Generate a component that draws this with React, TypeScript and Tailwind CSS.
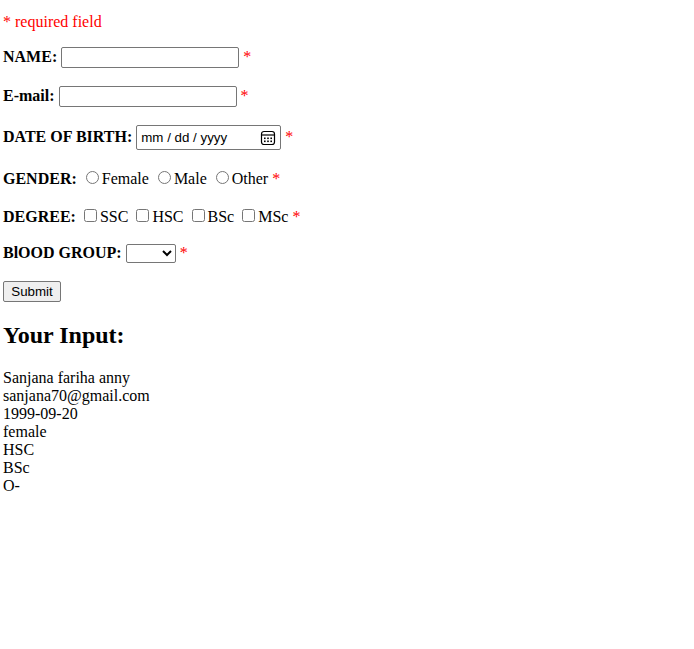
import React from "react";

const inputText =
  "align-baseline bg-white border border-[#767676] rounded-[2px] px-[2px] py-[1px] font-['Liberation_Sans',Arial,sans-serif] text-[13.333px] leading-[normal] text-black";

function Star() {
  return <span className="text-[red]">*</span>;
}

function CalendarIcon() {
  return (
    <svg width="16" height="16" viewBox="0 0 16 16" className="block">
      <rect x="1.5" y="1.5" width="13" height="13" rx="2.5" fill="none" stroke="#000" strokeWidth="1.2" />
      <line x1="1.5" y1="5" x2="14.5" y2="5" stroke="#000" strokeWidth="1.2" />
      <rect x="4" y="7.5" width="1.6" height="1.6" fill="#000" />
      <rect x="7.2" y="7.5" width="1.6" height="1.6" fill="#000" />
      <rect x="10.4" y="7.5" width="1.6" height="1.6" fill="#000" />
      <rect x="4" y="10.5" width="1.6" height="1.6" fill="#000" />
      <rect x="7.2" y="10.5" width="1.6" height="1.6" fill="#000" />
      <rect x="10.4" y="10.5" width="1.6" height="1.6" fill="#000" />
    </svg>
  );
}

export default function App() {
  const radio = "align-baseline m-[3px_3px_0px_5px] w-[13px] h-[13px]";
  const check = "align-baseline m-[3px_3px_3px_4px] w-[13px] h-[13px]";
  return (
    <div className="min-h-screen bg-white pl-[3px] pt-[13px] font-['Liberation_Serif','Times_New_Roman',serif] text-[16px] leading-[normal] text-black">
      <p className="mb-[16px]">
        <span className="text-[red]">* required field</span>
      </p>
      <form className="flex flex-col gap-[18px]" onSubmit={(e) => e.preventDefault()}>
        <div>
          <b>NAME:</b> <input type="text" className={`${inputText} w-[178px] h-[21px]`} /> <Star />
        </div>
        <div>
          <b>E-mail:</b> <input type="text" className={`${inputText} w-[178px] h-[21px]`} /> <Star />
        </div>
        <div>
          <b>DATE OF BIRTH:</b>{" "}
          <span className="inline-flex items-center align-baseline w-[145px] h-[25px] bg-white border border-[#767676] rounded-[2px] pl-[4px] pr-[4px] font-['Liberation_Sans',Arial,sans-serif] text-[13.333px] leading-[normal] text-black">
            <span className="flex-1 whitespace-pre">mm / dd / yyyy</span>
            <CalendarIcon />
          </span>{" "}
          <Star />
        </div>
        <div>
          <b>GENDER:</b> <input type="radio" name="g" className={radio} />Female{" "}
          <input type="radio" name="g" className={radio} />Male{" "}
          <input type="radio" name="g" className={radio} />Other <Star />
        </div>
        <div>
          <b>DEGREE:</b> <input type="checkbox" className={check} />SSC{" "}
          <input type="checkbox" className={check} />HSC{" "}
          <input type="checkbox" className={check} />BSc{" "}
          <input type="checkbox" className={check} />MSc <Star />
        </div>
        <div>
          <b>BlOOD GROUP:</b>{" "}
          <select className="align-baseline bg-white border border-[#767676] rounded-[2px] w-[50px] h-[19px] font-['Liberation_Sans',Arial,sans-serif] text-[13.333px] text-black">
            <option value=""></option>
            <option>A+</option>
            <option>O-</option>
          </select>{" "}
          <Star />
        </div>
        <div>
          <button
            type="submit"
            className="align-baseline bg-[#efefef] border border-[#767676] rounded-[2px] w-[58px] h-[21px] font-['Liberation_Sans',Arial,sans-serif] text-[13.333px] leading-[normal] text-black"
          >
            Submit
          </button>
        </div>
      </form>
      <h2 className="mt-[20px] mb-[20px] text-[24px] font-bold leading-[normal]">Your Input:</h2>
      <div>
        Sanjana fariha anny
        <br />
        sanjana70@gmail.com
        <br />
        1999-09-20
        <br />
        female
        <br />
        HSC
        <br />
        BSc
        <br />
        O-
      </div>
    </div>
  );
}
